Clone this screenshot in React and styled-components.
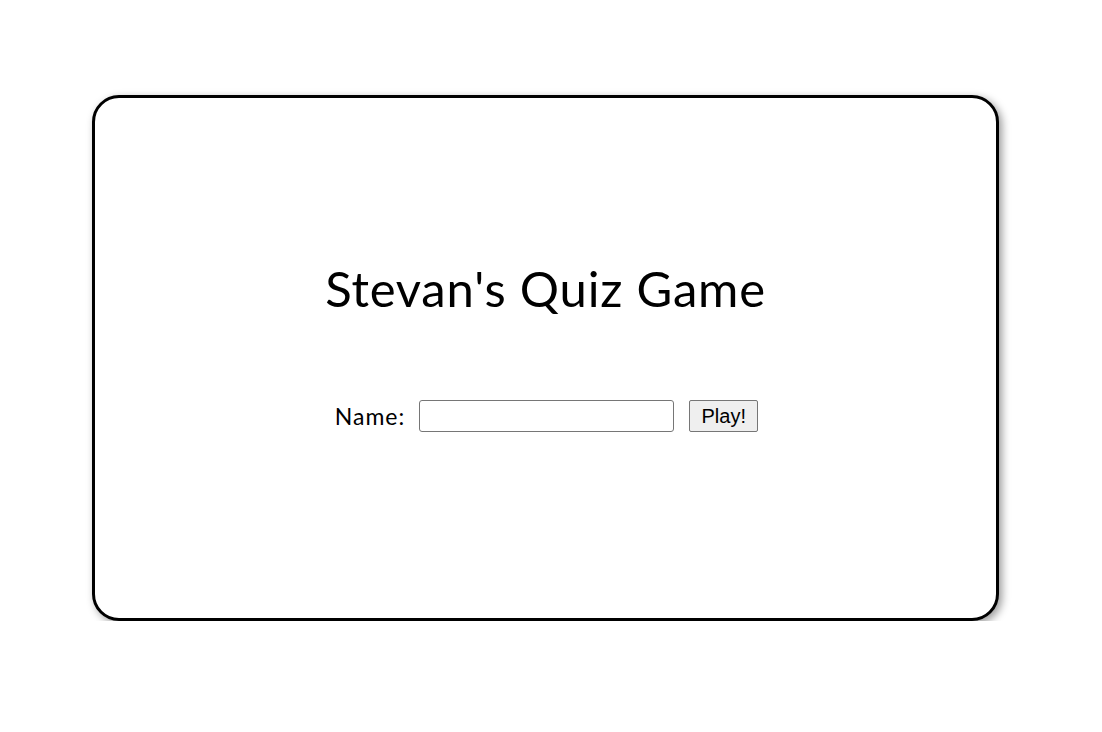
import React from "react";
import styled, { createGlobalStyle } from "styled-components";

const Global = createGlobalStyle`
  body {
    margin: 0;
    background: #ffffff;
    font-family: "Lato", "Open Sans", sans-serif;
  }
`;

const Page = styled.div`
  padding: 95px 0 0 92px;
`;

const Card = styled.div`
  box-sizing: border-box;
  width: 907px;
  height: 526px;
  border: 3px solid #000;
  border-radius: 27px;
  box-shadow: 3px 3px 8px rgba(0, 0, 0, 0.4);
  background: #fff;
  display: flex;
  flex-direction: column;
  align-items: center;
  padding-top: 160px;
`;

const Title = styled.h1`
  margin: 0;
  font-family: "Lato", sans-serif;
  font-weight: 400;
  font-size: 49px;
  line-height: 60px;
  color: #000;
  letter-spacing: 0.8px;
`;

const Form = styled.form`
  display: flex;
  align-items: center;
  margin-top: 82px;
  padding-left: 2px;
`;

const Label = styled.label`
  font-family: "Lato", sans-serif;
  font-size: 23px;
  letter-spacing: 1px;
  color: #000;
  margin-right: 14px;
`;

const Input = styled.input`
  box-sizing: border-box;
  width: 255px;
  height: 32px;
  border: 1px solid #767676;
  border-radius: 3px;
  padding: 0 6px;
  font-size: 18px;
  margin-right: 15px;
`;

const Button = styled.button`
  box-sizing: border-box;
  width: 69px;
  height: 32px;
  font-family: "Liberation Sans", Arial, sans-serif;
  font-size: 20px;
  color: #000;
  background: #efefef;
  border: 1px solid #767676;
  border-radius: 2px;
  padding: 0;
`;

export default function App() {
  return (
    <>
      <Global />
      <Page>
        <Card>
          <Title>Stevan's Quiz Game</Title>
          <Form onSubmit={(e) => e.preventDefault()}>
            <Label htmlFor="name">Name:</Label>
            <Input id="name" type="text" />
            <Button type="submit">Play!</Button>
          </Form>
        </Card>
      </Page>
    </>
  );
}
